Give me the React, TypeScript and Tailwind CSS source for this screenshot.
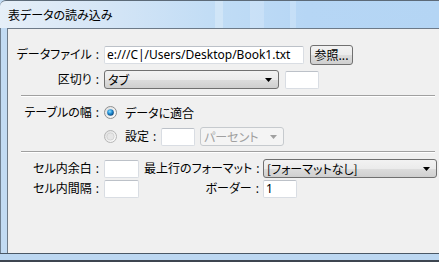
import React from "react";

const jp = "[font-family:'Noto_Sans_CJK_JP',sans-serif] [font-feature-settings:'palt']";

function Arrow({ gray }: { gray?: boolean }) {
  return (
    <svg width="7" height="4" viewBox="0 0 7 4" className="shrink-0">
      <path d="M0 0H7L3.5 4Z" fill={gray ? "#a0a0a0" : "#000"} />
    </svg>
  );
}

function TextBox({ w, children, className = "" }: { w: string; children?: React.ReactNode; className?: string }) {
  return (
    <div
      className={`${w} h-[18px] bg-white border border-[#d9dde3] border-t-[#bcc1c8] rounded-[2px] flex items-center px-[2px] text-[12px] text-black whitespace-nowrap overflow-hidden [font-family:'Noto_Sans',sans-serif] ${className}`}
    >
      {children}
    </div>
  );
}

function Combo({ w, children, disabled }: { w: string; children: React.ReactNode; disabled?: boolean }) {
  return (
    <div
      className={`${w} h-[19px] rounded-[3px] border flex items-center justify-between pl-[3px] pr-[6px] text-[12px] whitespace-nowrap ${jp} ${
        disabled
          ? "border-[#c6cace] bg-[#f4f4f4] text-[#a0a0a0]"
          : "border-[#707070] bg-[linear-gradient(#f2f2f2,#ebebeb_50%,#dddddd_51%,#cfcfcf)] text-black"
      }`}
    >
      <span>{children}</span>
      <Arrow gray={disabled} />
    </div>
  );
}

function Colon() {
  return <span className="inline-block pl-[4px] pr-[4px] [font-family:'Noto_Sans',sans-serif]">:</span>;
}

function Label({ children }: { children: React.ReactNode }) {
  return (
    <div className="w-[95px] text-right text-[12px] text-black whitespace-nowrap">
      <span className={jp}>{children}</span>
      <Colon />
    </div>
  );
}

function Radio({ checked }: { checked?: boolean }) {
  return (
    <svg width="13" height="13" viewBox="0 0 13 13" className="shrink-0">
      <defs>
        <linearGradient id={checked ? "rg1" : "rg0"} x1="0" y1="0" x2="1" y2="1">
          <stop offset="0" stopColor="#dcdcdc" />
          <stop offset="1" stopColor="#ffffff" />
        </linearGradient>
        <radialGradient id="dot" cx="0.4" cy="0.35" r="0.7">
          <stop offset="0" stopColor="#8fe0ff" />
          <stop offset="0.5" stopColor="#1e8bd3" />
          <stop offset="1" stopColor="#0b3f70" />
        </radialGradient>
      </defs>
      <circle cx="6.5" cy="6.5" r="6" fill={`url(#${checked ? "rg1" : "rg0"})`} stroke={checked ? "#8e8f8f" : "#b5b5b5"} />
      {checked ? (
        <circle cx="6.5" cy="6.5" r="3.3" fill="url(#dot)" />
      ) : (
        <circle cx="6.5" cy="6.5" r="3.6" fill="#e6e6e6" stroke="#cfcfcf" strokeWidth="0.8" />
      )}
    </svg>
  );
}

function Sep() {
  return (
    <div className="ml-[13px] mr-[4px]">
      <div className="h-px bg-[#a0a0a0]" />
      <div className="h-px bg-white" />
    </div>
  );
}

export default function App() {
  return (
    <div className="w-[439px] h-[262px] overflow-hidden bg-[#c2dbf3] flex flex-col">
      {/* title bar */}
      <div className="h-[28px] shrink-0 border-t border-[#5c6a78] rounded-tl-[6px] bg-[linear-gradient(90deg,#e6eff8_0%,#d4e5f6_25%,#c0dcf5_50%,#b6d6f5_70%,#b4d5f4_100%)] flex items-center pl-[8px] relative">
        <div className="absolute left-[215px] top-0 w-[8px] h-full bg-white/25" />
        <div className="absolute left-[250px] top-0 w-[14px] h-full bg-white/20" />
        <div className="absolute left-[290px] top-0 w-[6px] h-full bg-white/20" />
        <span className={`relative text-[12px] text-black ${jp}`}>表データの読み込み</span>
      </div>
      {/* body */}
      <div className="flex flex-1 min-h-0">
        <div className="w-[7px] shrink-0 border-l border-[#6f7f90] bg-[#c2dbf3]" />
        <div className="flex-1 border-l border-t border-[#6d7a88] bg-[#f0f0f0] flex flex-col pt-[16px]">
          {/* row 1 */}
          <div className="flex items-center h-[19px]">
            <Label>データファイル</Label>
            <TextBox w="w-[200px]" className="ml-[1px]">e:///C|/Users/Desktop/Book1.txt</TextBox>
            <div
              className={`ml-[6px] w-[43px] h-[20px] rounded-[3px] border border-[#707070] bg-[linear-gradient(#f2f2f2,#ebebeb_50%,#dddddd_51%,#cfcfcf)] flex items-center justify-center text-[12px] text-black ${jp}`}
            >
              参照...
            </div>
          </div>
          {/* row 2 */}
          <div className="flex items-center h-[19px] mt-[6px]">
            <Label>区切り</Label>
            <div className="ml-[1px]">
              <Combo w="w-[175px]">タブ</Combo>
            </div>
            <TextBox w="w-[34px]" className="ml-[6px]" />
          </div>
          <div className="mt-[6px]">
            <Sep />
          </div>
          {/* row 3 */}
          <div className="flex items-center h-[19px] mt-[6px]">
            <Label>テーブルの幅</Label>
            <div className="ml-[1px] flex items-center">
              <Radio checked />
              <span className={`ml-[8px] text-[12px] text-black ${jp}`}>データに適合</span>
            </div>
          </div>
          {/* row 4 */}
          <div className="flex items-center h-[19px] mt-[5px]">
            <div className="w-[95px]" />
            <div className="ml-[1px] flex items-center">
              <Radio />
              <span className="ml-[8px] w-[36px] text-[12px] text-black whitespace-nowrap">
                <span className={jp}>設定</span>
                <Colon />
              </span>
              <TextBox w="w-[34px]" className="bg-[#f4f4f4]" />
              <div className="ml-[5px]">
                <Combo w="w-[84px]" disabled>
                  パーセント
                </Combo>
              </div>
            </div>
          </div>
          <div className="mt-[5px]">
            <Sep />
          </div>
          {/* row 5 */}
          <div className="flex items-center h-[19px] mt-[6px]">
            <Label>セル内余白</Label>
            <TextBox w="w-[35px]" className="ml-[1px]" />
            <div className="w-[124px] pl-[5px] text-[12px] text-black whitespace-nowrap">
              <span className={jp}>最上行のフォーマット</span>
              <Colon />
            </div>
            <Combo w="w-[174px]">[フォーマットなし]</Combo>
          </div>
          {/* row 6 */}
          <div className="flex items-center h-[19px] mt-[1px]">
            <Label>セル内間隔</Label>
            <TextBox w="w-[35px]" className="ml-[1px]" />
            <div className="w-[124px] text-right text-[12px] text-black whitespace-nowrap">
              <span className={jp}>ボーダー</span>
              <Colon />
            </div>
            <TextBox w="w-[34px]">1</TextBox>
          </div>
        </div>
      </div>
      {/* bottom frame */}
      <div className="h-[9px] shrink-0 border-t border-[#4a5866] border-b-2 border-b-[#3d4550] bg-[#bcd7f1]" />
    </div>
  );
}
